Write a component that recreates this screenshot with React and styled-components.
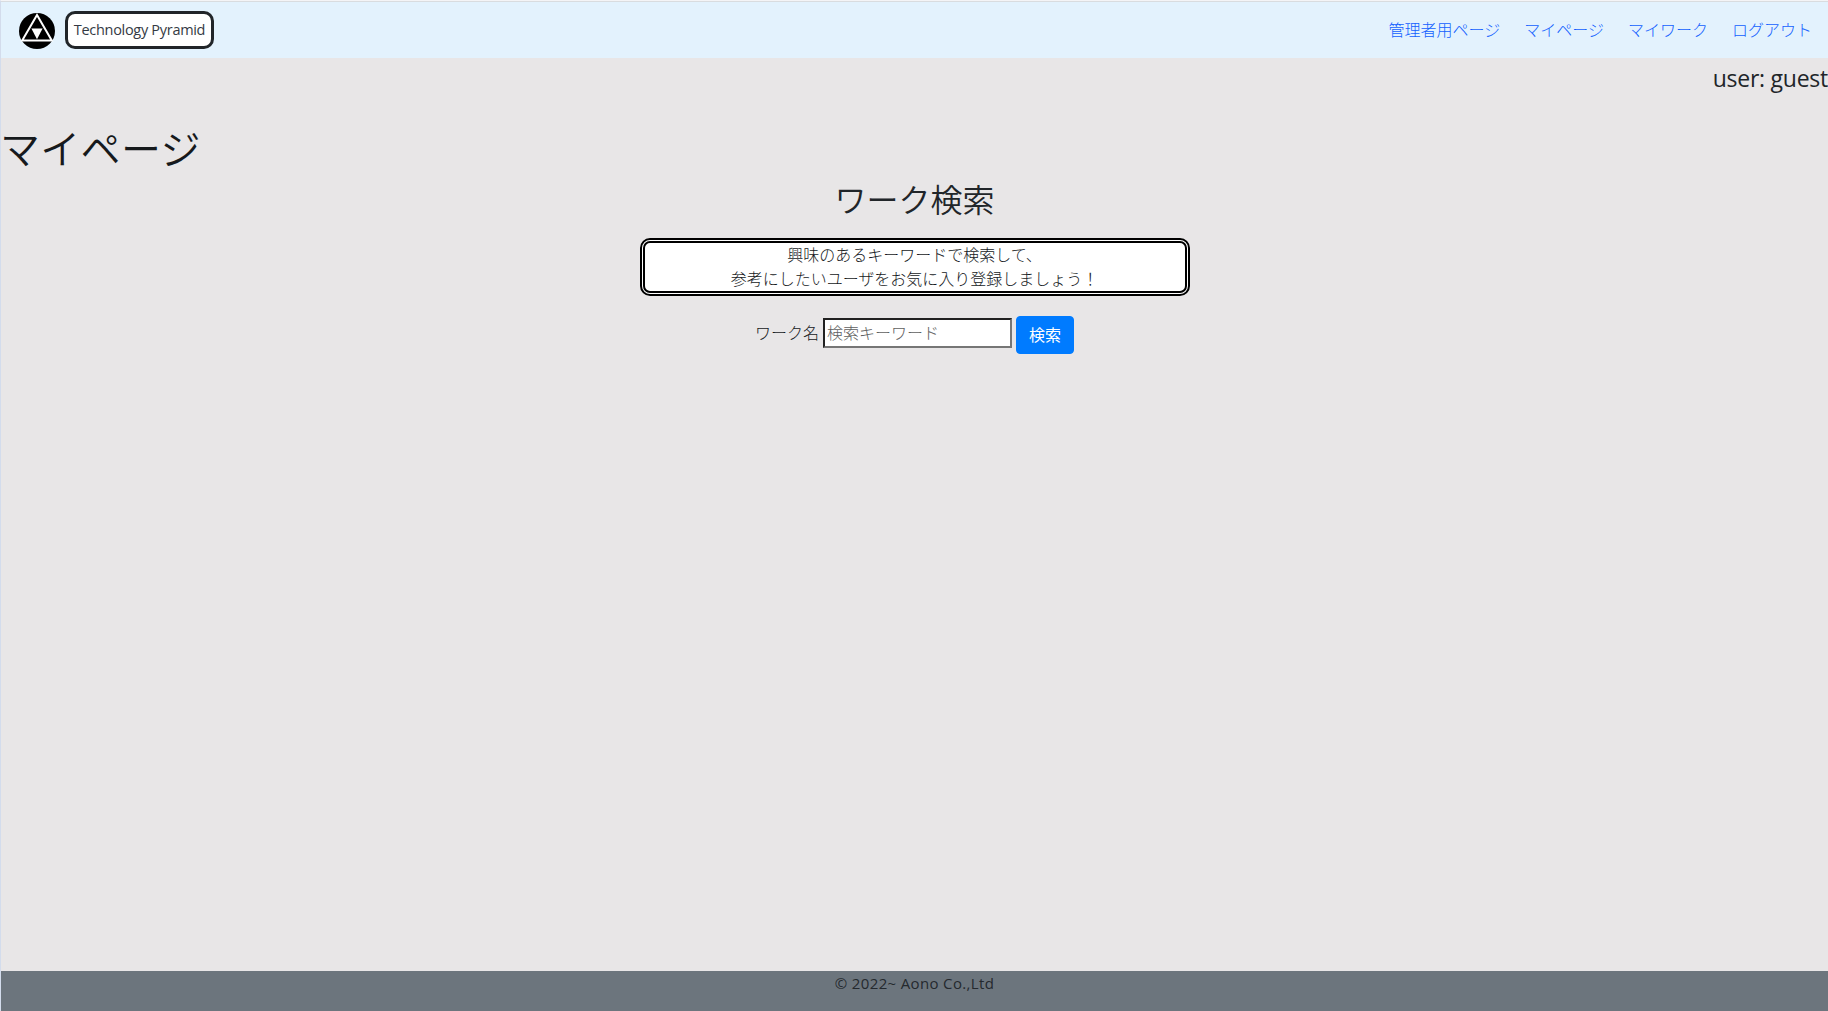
import React, {useState} from 'react';
import styled, {createGlobalStyle} from 'styled-components';

const links = ['管理者用ページ', 'マイページ', 'マイワーク', 'ログアウト'];

export default function App() {
  const [keyword, setKeyword] = useState('');
  return (
    <>
      <GlobalStyle />
      <Page>
        <Navbar>
          <Brand href="#">
            <PyramidLogo />
            <BrandName>
              <span>Technology Pyramid</span>
            </BrandName>
          </Brand>
          <NavLinks>
            {links.map((link) => (
              <NavLink href="#" key={link}>
                {link}
              </NavLink>
            ))}
          </NavLinks>
        </Navbar>
        <Main>
          <UserName>
            <span>user: guest</span>
          </UserName>
          <PageTitle>マイページ</PageTitle>
          <SectionTitle>ワーク検索</SectionTitle>
          <Notice>
            興味のあるキーワードで検索して、
            <br />
            参考にしたいユーザをお気に入り登録しましょう！
          </Notice>
          <SearchForm onSubmit={(e) => e.preventDefault()}>
            <label htmlFor="keyword">ワーク名</label>
            <SearchInput
              id="keyword"
              type="text"
              placeholder="検索キーワード"
              value={keyword}
              onChange={(e) => setKeyword(e.target.value)}
            />
            <SearchButton type="submit">検索</SearchButton>
          </SearchForm>
        </Main>
        <Footer>
          <span>© 2022~ Aono Co.,Ltd</span>
        </Footer>
      </Page>
    </>
  );
}

function PyramidLogo() {
  return (
    <Logo viewBox="0 0 36 36" aria-label="logo">
      <circle cx="18" cy="18" r="18" fill="#000" />
      <path
        d="M18 2 L3.2 27.6 H32.8 Z"
        fill="none"
        stroke="#fff"
        strokeWidth="2"
      />
      <path d="M12.4 15.6 H23.6 L18 26.2 Z" fill="#fff" />
    </Logo>
  );
}

const GlobalStyle = createGlobalStyle`
  *,
  *::before,
  *::after {
    box-sizing: border-box;
  }
  body {
    margin: 0;
    font-family: 'Open Sans', 'Noto Sans CJK JP', sans-serif;
    font-size: 16px;
    font-weight: 300;
    line-height: 1.5;
    color: #16191c;
    background-color: #e8e6e7;
  }
`;

const Page = styled.div`
  display: flex;
  flex-direction: column;
  height: 100vh;
  border-top: 1px solid #f4f4f6;
  border-left: 1px solid #d3dcec;
`;

const Navbar = styled.nav`
  display: flex;
  align-items: center;
  justify-content: space-between;
  height: 57px;
  flex-shrink: 0;
  padding: 0 16px 0 18px;
  border-top: 1px solid #d9dcdf;
  background-color: #e3f2fd;
`;

const Brand = styled.a`
  display: flex;
  align-items: center;
  gap: 10px;
  color: #343a44;
  text-decoration: none;
`;

const Logo = styled.svg`
  width: 36px;
  height: 36px;
  margin-top: 1px;
`;

const BrandName = styled.span`
  display: flex;
  align-items: center;
  justify-content: center;
  width: 149px;
  height: 38px;
  border: 3px solid #212529;
  border-radius: 10px;
  background-color: #fff;
  font-size: 14.5px;
  font-weight: 400;
  letter-spacing: -0.3px;
  white-space: nowrap;
`;

const NavLinks = styled.div`
  display: flex;
  gap: 24px;
`;

const NavLink = styled.a`
  color: #1260ff;
  text-decoration: none;
`;

const Main = styled.main`
  display: flex;
  flex-direction: column;
  flex: 1;
`;

const UserName = styled.div`
  align-self: flex-end;
  height: 67px;
  padding-top: 2px;
  color: #212529;
  font-size: 23px;
  font-weight: 400;
  line-height: 36px;
  letter-spacing: -0.25px;
  white-space: nowrap;
`;

const PageTitle = styled.h1`
  margin: 0 0 0 -1px;
  font-size: 40px;
  font-weight: 350;
  line-height: 48px;
  letter-spacing: 0.3px;
`;

const SectionTitle = styled.h2`
  margin: 8px 0 19px;
  color: #212529;
  font-size: 32px;
  font-weight: 350;
  line-height: 38px;
  text-align: center;
`;

const Notice = styled.div`
  align-self: center;
  width: 550px;
  border: 5px double #000;
  border-radius: 10px;
  background-color: #fff;
  text-align: center;
`;

const SearchForm = styled.form`
  display: flex;
  justify-content: center;
  gap: 4px;
  margin-top: 20px;
  label {
    line-height: 34px;
  }
`;

const SearchInput = styled.input`
  width: 189px;
  height: 30px;
  margin-top: 2px;
  padding: 1px 2px;
  border: 2px inset #767676;
  border-radius: 0;
  background-color: #fff;
  font: inherit;
  &::placeholder {
    color: #606060;
  }
`;

const SearchButton = styled.button`
  width: 58px;
  height: 38px;
  padding: 0;
  border: 1px solid #007bff;
  border-radius: 4px;
  background-color: #007bff;
  color: #fff;
  font: inherit;
  font-weight: 400;
  cursor: pointer;
`;

const Footer = styled.footer`
  height: 40px;
  background-color: #6c757d;
  color: #24292e;
  font-weight: 400;
  font-size: 15px;
  line-height: 25px;
  letter-spacing: 0.35px;
  text-align: center;
`;
